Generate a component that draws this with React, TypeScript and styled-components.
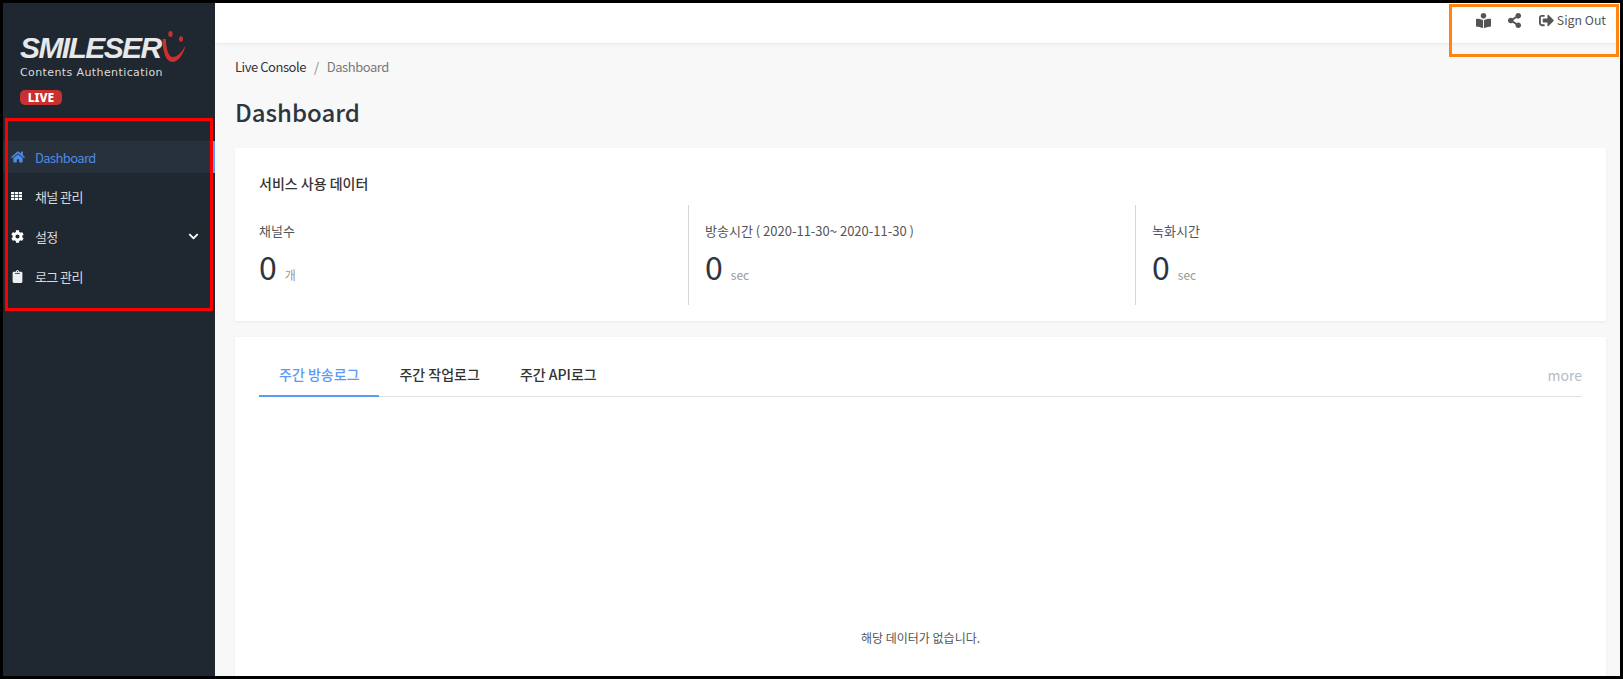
import React from 'react';
import styled, { createGlobalStyle } from 'styled-components';
import { FaHome, FaCog, FaClipboard, FaChevronDown, FaBookReader, FaShareAlt, FaSignOutAlt } from 'react-icons/fa';

const Global = createGlobalStyle`
  html, body { margin: 0; padding: 0; background: #000; }
  * { box-sizing: border-box; }
  body { font-family: "Noto Sans CJK KR", "Noto Sans", sans-serif; }
`;

const Frame = styled.div`
  position: relative;
  width: 1623px;
  height: 679px;
  border: 3px solid #000;
  overflow: hidden;
  display: flex;
  background: #f8f8f8;
`;

const Sidebar = styled.aside`
  width: 212px;
  flex: none;
  background: #1f2730;
  display: flex;
  flex-direction: column;
`;

const Brand = styled.div`
  padding: 28px 0 0 17px;
  height: 138px;
  display: flex;
  flex-direction: column;
  align-items: flex-start;
`;

const LogoRow = styled.div`
  display: flex;
  align-items: flex-end;
  height: 32px;
`;

const LogoText = styled.span`
  font-family: "Liberation Sans", sans-serif;
  font-size: 30px;
  line-height: 30px;
  font-weight: 700;
  font-style: italic;
  letter-spacing: -1.6px;
  color: #e8e8e8;
`;

const Tagline = styled.div`
  margin-top: 3px;
  font-family: "DejaVu Sans", sans-serif;
  font-size: 11px;
  line-height: 14px;
  letter-spacing: 0.4px;
  color: #dcdcdc;
`;

const LiveBadge = styled.span`
  margin-top: 10px;
  width: 42px;
  height: 15px;
  border-radius: 5px;
  background: #c9302f;
  color: #fff;
  font-family: "Noto Sans", sans-serif;
  font-size: 12px;
  font-weight: 800;
  line-height: 15px;
  text-align: center;
`;

const Nav = styled.nav`
  display: flex;
  flex-direction: column;
`;

const NavItem = styled.div<{ $active?: boolean }>`
  height: ${p => (p.$active ? '32px' : '40px')};
  margin-bottom: ${p => (p.$active ? '3px' : '0')};
  display: flex;
  align-items: center;
  padding: 0 16px 0 8px;
  font-size: 13px;
  letter-spacing: -0.6px;
  color: ${p => (p.$active ? '#4d8ae6' : '#d8dadc')};
  background: ${p => (p.$active ? '#27313c' : 'transparent')};
  border-right: ${p => (p.$active ? '2px solid #5b9bf8' : '0')};
  svg { flex: none; }
`;

const NavIcon = styled.span`
  width: 24px;
  display: flex;
  align-items: center;
  font-size: 13px;
`;

const NavLabel = styled.span`
  flex: 1;
`;

const Main = styled.main`
  flex: 1;
  min-width: 0;
  display: flex;
  flex-direction: column;
`;

const Topbar = styled.header`
  height: 40px;
  flex: none;
  background: #fff;
  box-shadow: 0 1px 3px rgba(0, 0, 0, 0.08);
  display: flex;
  align-items: center;
  justify-content: flex-end;
  padding: 0 14px 6px 0;
  color: #555;
  font-size: 12.3px;
`;

const TopIcon = styled.span<{ $gap: number }>`
  display: flex;
  margin-right: ${p => p.$gap}px;
`;

const Content = styled.div`
  flex: 1;
  padding: 0 14px 0 20px;
  display: flex;
  flex-direction: column;
`;

const Crumbs = styled.div`
  margin-top: 13px;
  height: 20px;
  display: flex;
  align-items: center;
  font-size: 13px;
  letter-spacing: -0.45px;
  color: #333;
`;

const CrumbSep = styled.span`
  margin: 0 8px;
  color: #8a8a8a;
`;

const CrumbCurrent = styled.span`
  color: #7a7a7a;
`;

const Title = styled.h1`
  margin: 18px 0 0;
  height: 36px;
  font-size: 24px;
  line-height: 36px;
  font-weight: 500;
  color: #2c3640;
`;

const Card = styled.section`
  margin-top: 18px;
  background: #fff;
  box-shadow: 0 1px 3px rgba(0, 0, 0, 0.06);
  padding: 23px 24px 16px;
`;

const CardTitle = styled.h2`
  margin: 0;
  height: 24px;
  font-size: 14px;
  line-height: 24px;
  font-weight: 500;
  color: #333;
`;

const Stats = styled.div`
  margin: 10px 0 0 -16px;
  display: grid;
  grid-template-columns: 446px 447px 447px;
`;

const Stat = styled.div`
  height: 100px;
  padding: 15px 0 0 16px;
  &:not(:last-child) { border-right: 1px solid #d6d6d6; }
`;

const StatLabel = styled.div`
  font-size: 13px;
  line-height: 22px;
  color: #555;
`;

const StatValue = styled.div`
  margin-top: 1px;
  display: flex;
  align-items: baseline;
  color: #2c3640;
  font-size: 32px;
  line-height: 46px;
  font-weight: 400;
`;

const StatUnit = styled.span`
  margin-left: 8px;
  font-size: 12px;
  color: #999;
  font-weight: 400;
`;

const LogCard = styled(Card)`
  margin-top: 16px;
  flex: 1;
  padding: 20px 24px 0;
  display: flex;
  flex-direction: column;
  margin-bottom: -40px;
`;

const TabBar = styled.div`
  display: flex;
  align-items: center;
  height: 40px;
  border-bottom: 1px solid #e2e2e2;
`;

const Tab = styled.div<{ $active?: boolean }>`
  height: 40px;
  padding: 0 20px 4px;
  margin-bottom: -1px;
  display: flex;
  align-items: center;
  font-size: 14px;
  font-weight: 500;
  color: ${p => (p.$active ? '#5b9bf8' : '#333')};
  border-bottom: 2px solid ${p => (p.$active ? '#5b9bf8' : 'transparent')};
`;

const More = styled.div`
  margin-left: auto;
  padding-bottom: 4px;
  font-size: 14px;
  color: #b4bcc6;
`;

const Empty = styled.div`
  margin-top: 231px;
  text-align: center;
  font-size: 12px;
  line-height: 20px;
  color: #555;
`;

const Annotation = styled.div<{ $color: string }>`
  position: absolute;
  border: 3px solid ${p => p.$color};
  pointer-events: none;
`;

const RedBox = styled(Annotation)`
  left: 2px;
  top: 115px;
  width: 208px;
  height: 193px;
`;

const OrangeBox = styled(Annotation)`
  right: 1px;
  top: 1px;
  width: 170px;
  height: 53px;
`;

const Smile = () => (
  <svg width="24" height="33" viewBox="0 0 24 33" style={{ marginLeft: 1, marginBottom: 0 }}>
    <path d="M0.5 9 L4 9 C4 19 6.5 27 11 27 C15.5 27 20 22 23.5 15.5 C21.5 24 16.5 32 10.5 32 C4 32 0.5 22 0.5 9 Z" fill="#c9302f" />
    <ellipse cx="8.5" cy="4" rx="2.2" ry="3" fill="#c9302f" />
    <ellipse cx="19" cy="9" rx="2" ry="2.8" fill="#c9302f" />
  </svg>
);

const GridIcon = () => (
  <svg width="11" height="8" viewBox="0 0 11 8" fill="#fff">
    {[0, 2.9, 5.8].map(y =>
      [0, 3.9, 7.8].map(x => <rect key={`${x}-${y}`} x={x} y={y} width="3.2" height="2.2" />)
    )}
  </svg>
);

const stats = [
  { label: '채널수', unit: '개' },
  { label: '방송시간 ( 2020-11-30~ 2020-11-30 )', unit: 'sec' },
  { label: '녹화시간', unit: 'sec' },
];

export default function App() {
  return (
    <>
      <Global />
      <Frame>
        <Sidebar>
          <Brand>
            <LogoRow>
              <LogoText>SMILESER</LogoText>
              <Smile />
            </LogoRow>
            <Tagline>Contents Authentication</Tagline>
            <LiveBadge>LIVE</LiveBadge>
          </Brand>
          <Nav>
            <NavItem $active>
              <NavIcon><FaHome size={14} /></NavIcon>
              <NavLabel>Dashboard</NavLabel>
            </NavItem>
            <NavItem>
              <NavIcon><GridIcon /></NavIcon>
              <NavLabel>채널 관리</NavLabel>
            </NavItem>
            <NavItem>
              <NavIcon><FaCog size={13} color="#fff" /></NavIcon>
              <NavLabel>설정</NavLabel>
              <FaChevronDown size={11} color="#fff" />
            </NavItem>
            <NavItem>
              <NavIcon><FaClipboard size={13} color="#eef1f3" /></NavIcon>
              <NavLabel>로그 관리</NavLabel>
            </NavItem>
          </Nav>
        </Sidebar>
        <Main>
          <Topbar>
            <TopIcon $gap={16}><FaBookReader size={15} /></TopIcon>
            <TopIcon $gap={17}><FaShareAlt size={15} /></TopIcon>
            <TopIcon $gap={3}><FaSignOutAlt size={15} /></TopIcon>
            <span>Sign Out</span>
          </Topbar>
          <Content>
            <Crumbs>
              <span>Live Console</span>
              <CrumbSep>/</CrumbSep>
              <CrumbCurrent>Dashboard</CrumbCurrent>
            </Crumbs>
            <Title>Dashboard</Title>
            <Card>
              <CardTitle>서비스 사용 데이터</CardTitle>
              <Stats>
                {stats.map(s => (
                  <Stat key={s.label}>
                    <StatLabel>{s.label}</StatLabel>
                    <StatValue>0<StatUnit>{s.unit}</StatUnit></StatValue>
                  </Stat>
                ))}
              </Stats>
            </Card>
            <LogCard>
              <TabBar>
                <Tab $active>주간 방송로그</Tab>
                <Tab>주간 작업로그</Tab>
                <Tab>주간 API로그</Tab>
                <More>more</More>
              </TabBar>
              <Empty>해당 데이터가 없습니다.</Empty>
            </LogCard>
          </Content>
        </Main>
        <RedBox $color="#ff0000" />
        <OrangeBox $color="#ff8412" />
      </Frame>
    </>
  );
}
